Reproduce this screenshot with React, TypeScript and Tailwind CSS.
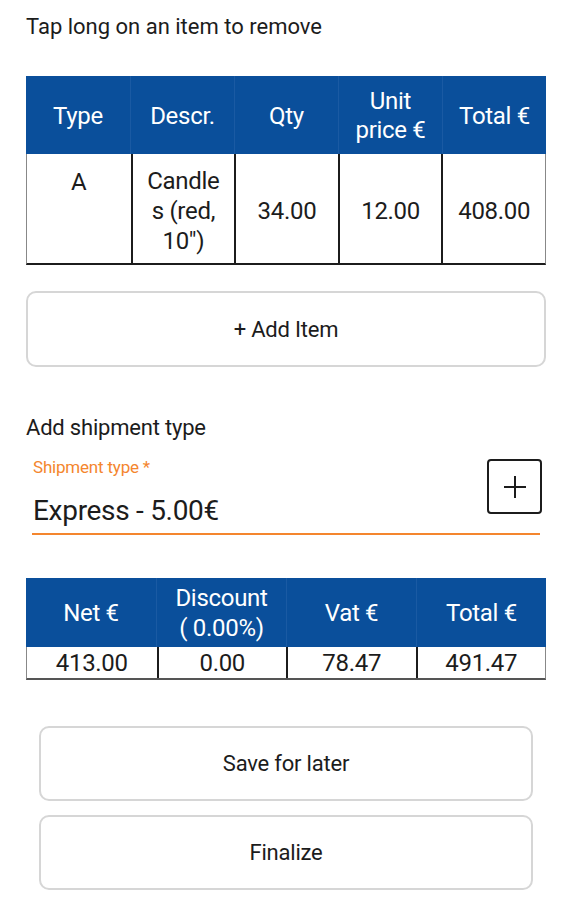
const font = { fontFamily: 'Roboto, "Noto Sans", sans-serif' };

const itemHead = ['Type', 'Descr.', 'Qty', 'Unit price €', 'Total €'];
const sumRow = ['413.00', '0.00', '78.47', '491.47'];

function OutlineButton({ label, className }: { label: string; className: string }) {
  return (
    <button className={`flex items-center justify-center rounded-[10px] border-2 border-[#d6d6d6] bg-white text-[22px] tracking-[-0.2px] text-[#1c1c1c] ${className}`}>
      {label}
    </button>
  );
}

export default function App() {
  return (
    <div className="w-[571px] h-[900px] bg-white text-[#1c1c1c]" style={font}>
      <div className="px-[26px] pt-[13px]">
        <p className="text-[22px] leading-[28px]">Tap long on an item to remove</p>

        {/* items table */}
        <div className="mt-[35px] w-[520px]">
          <div className="grid grid-cols-5 h-[78px] bg-[#0a4f9b] text-white text-[24px] leading-[29px] tracking-[-0.3px]">
            {itemHead.map((h, i) => (
              <div
                key={h}
                className={`flex items-center justify-center text-center px-2 pt-[2px] ${i > 0 ? 'border-l border-[#1a5aa3]' : ''}`}
              >
                {h}
              </div>
            ))}
          </div>
          <div className="grid grid-cols-5 h-[111px] border-b-2 border-x border-x-[#888] border-b-[#1c1c1c] text-[24px] leading-[30px] tracking-[-0.3px]">
            <div className="flex justify-center pt-[13px]">A</div>
            <div className="flex items-center justify-center text-center border-l-2 border-[#1c1c1c] pt-[4px]">
              Candle<br />s (red,<br />10")
            </div>
            <div className="flex items-center justify-center border-l-2 border-[#1c1c1c] pt-[4px]">34.00</div>
            <div className="flex items-center justify-center border-l-2 border-[#1c1c1c] pt-[4px]">12.00</div>
            <div className="flex items-center justify-center border-l-2 border-[#1c1c1c] pt-[4px]">408.00</div>
          </div>
        </div>

        <OutlineButton label="+ Add Item" className="mt-[26px] w-[520px] h-[76px]" />

        <p className="mt-[47px] text-[22px] leading-[28px] tracking-[-0.2px]">Add shipment type</p>

        {/* shipment select */}
        <div className="flex items-start mt-[14px]">
          <div className="w-[508px] ml-[6px]">
            <p className="text-[17px] leading-[22px] text-[#f4862e] pl-[1px] tracking-[-0.2px]">Shipment type *</p>
            <p className="text-[28px] leading-[34px] mt-[16px] pl-[1px] tracking-[-0.3px]">Express - 5.00€</p>
            <div className="mt-[5px] h-[2px] bg-[#f4862e]" />
          </div>
          <div className="-ml-[53px] mt-[3px] w-[55px] h-[55px] border-2 border-[#1c1c1c] rounded-[4px] flex items-center justify-center bg-white">
            <svg width="26" height="26" viewBox="0 0 26 26">
              <path d="M13 2v22M2 13h22" stroke="#1c1c1c" strokeWidth="2" />
            </svg>
          </div>
        </div>

        {/* summary table */}
        <div className="mt-[43px] w-[520px]">
          <div className="grid grid-cols-4 h-[69px] bg-[#0a4f9b] text-white text-[24px] leading-[30px] tracking-[-0.3px]">
            <div className="flex items-center justify-center text-center">Net €</div>
            <div className="flex items-center justify-center text-center border-l border-[#1a5aa3]">
              Discount<br />( 0.00%)
            </div>
            <div className="flex items-center justify-center text-center border-l border-[#1a5aa3]">Vat €</div>
            <div className="flex items-center justify-center text-center border-l border-[#1a5aa3]">Total €</div>
          </div>
          <div className="grid grid-cols-4 h-[33px] border-b-2 border-x border-x-[#888] border-b-[#555] text-[24px] leading-[30px] tracking-[-0.3px]">
            {sumRow.map((v, i) => (
              <div
                key={i}
                className={`flex items-center justify-center ${i > 0 ? 'border-l-2 border-[#1c1c1c]' : ''}`}
              >
                {v}
              </div>
            ))}
          </div>
        </div>

        <div className="px-[13px] mt-[46px] flex flex-col gap-[14px]">
          <OutlineButton label="Save for later" className="w-[494px] h-[75px]" />
          <OutlineButton label="Finalize" className="w-[494px] h-[75px]" />
        </div>
      </div>
    </div>
  );
}
